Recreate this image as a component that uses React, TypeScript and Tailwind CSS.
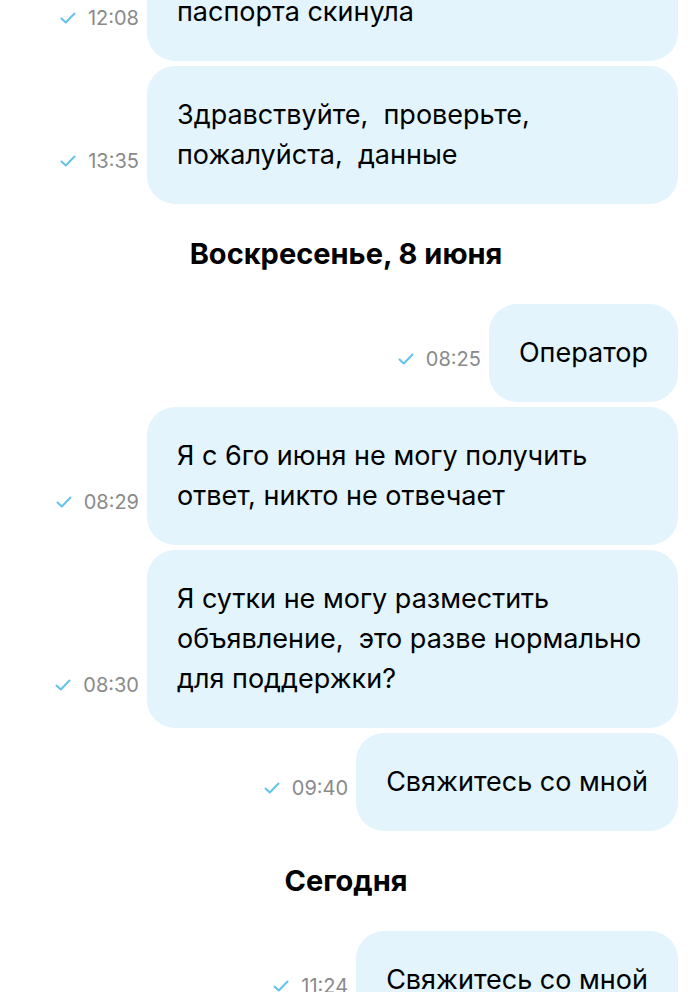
import React from 'react';

type Msg = { time: string; lines: string[]; wide?: boolean; first?: boolean };
type Item = { kind: 'msg'; msg: Msg } | { kind: 'day'; label: string };

const items: Item[] = [
    { kind: 'msg', msg: { time: '12:08', lines: ['паспорта скинула'], wide: true, first: true } },
    { kind: 'msg', msg: { time: '13:35', lines: ['Здравствуйте,  проверьте,', 'пожалуйста,  данные'], wide: true } },
    { kind: 'day', label: 'Воскресенье, 8 июня' },
    { kind: 'msg', msg: { time: '08:25', lines: ['Оператор'] } },
    { kind: 'msg', msg: { time: '08:29', lines: ['Я с 6го июня не могу получить', 'ответ, никто не отвечает'], wide: true } },
    { kind: 'msg', msg: { time: '08:30', lines: ['Я сутки не могу разместить', 'объявление,  это разве нормально', 'для поддержки?'], wide: true } },
    { kind: 'msg', msg: { time: '09:40', lines: ['Свяжитесь со мной'] } },
    { kind: 'day', label: 'Сегодня' },
    { kind: 'msg', msg: { time: '11:24', lines: ['Свяжитесь со мной'] } },
];

const Check = () => (
    <svg width="16" height="12" viewBox="0 0 16 12" fill="none">
        <path d="M1.5 6.5 L5.8 10.5 L14.5 1.5" stroke="#62c3ec" strokeWidth="2" strokeLinecap="round" strokeLinejoin="round" />
    </svg>
);

const Bubble = ({ msg }: { msg: Msg }) => (
    <div className={`flex justify-end items-end gap-2 pr-[22px] ${msg.first ? '-mt-[106px]' : ''}`}>
        <div className="flex items-center gap-[12px] mb-[31px] leading-6 text-[20px] text-[#8a8a8a]">
            <Check />
            <span>{msg.time}</span>
        </div>
        <div
            className={`bg-[#e3f4fd] rounded-[28px] px-[30px] pb-[29px] text-[27px] leading-[40px] text-black whitespace-pre ${
                msg.wide ? 'w-[531px]' : ''
            } ${msg.first ? 'pt-[98px]' : 'pt-[29px]'}`}
        >
            {msg.lines.map((l, i) => (
                <div key={i}>{l}</div>
            ))}
        </div>
    </div>
);

export default function App() {
    return (
        <div className="w-[700px] h-[992px] overflow-hidden bg-white font-['Inter','Noto_Sans',sans-serif]">
            <div className="flex flex-col gap-[5px]">
                {items.map((it, i) =>
                    it.kind === 'day' ? (
                        <div key={i} className="h-[90px] flex items-center justify-center pr-2 text-[29px] font-bold text-black">
                            {it.label}
                        </div>
                    ) : (
                        <Bubble key={i} msg={it.msg} />
                    )
                )}
            </div>
        </div>
    );
}
